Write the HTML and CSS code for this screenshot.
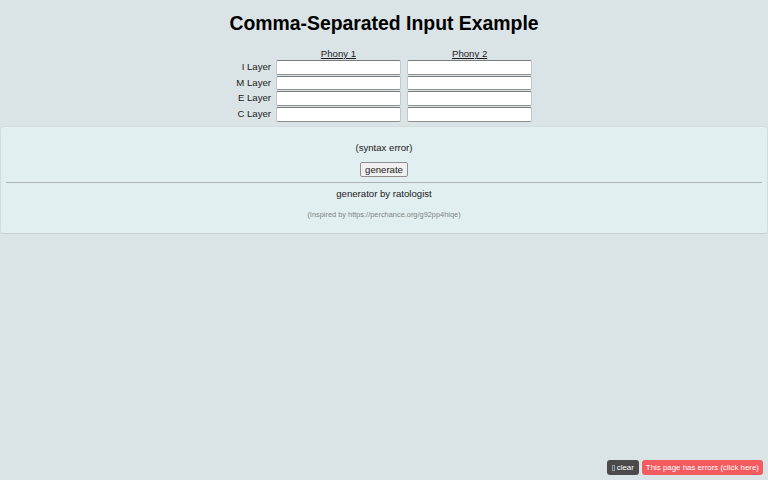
FILE: index.html
```html
<!DOCTYPE html>
<html lang="en">
<head>
    <meta charset="UTF-8">
    <title>Comma-Separated Input Example</title>
    <link rel="stylesheet" href="styles.css">
</head>
<body>
    <h1 class="title">Comma-Separated Input Example</h1>
    <div class="inputs">
        <span></span>
        <span class="phony">Phony 1</span>
        <span class="phony">Phony 2</span>
        <span class="layer">I Layer</span>
        <input class="field" type="text">
        <input class="field" type="text">
        <span class="layer">M Layer</span>
        <input class="field" type="text">
        <input class="field" type="text">
        <span class="layer">E Layer</span>
        <input class="field" type="text">
        <input class="field" type="text">
        <span class="layer">C Layer</span>
        <input class="field" type="text">
        <input class="field" type="text">
    </div>
    <div class="panel">
        <p class="output">(syntax error)</p>
        <button class="generate">generate</button>
        <hr class="rule">
        <p class="credit">generator by ratologist</p>
        <p class="inspired">(Inspired by https://perchance.org/g92pp4hiqe)</p>
    </div>
    <div class="notices">
        <button class="clear"><span class="tofu"></span>clear</button>
        <button class="errors">This page has errors (click here)</button>
    </div>
</body>
</html>
```

FILE: styles.css
```css
html, body {
    height: 100%;
}
body {
    margin: 0;
    background: #dae4e6;
    color: #1a1a1a;
    font-family: "Liberation Sans", Arial, sans-serif;
    font-size: 9.6px;
    text-align: center;
    overflow: hidden;
}
.title {
    margin: 0;
    padding-top: 11px;
    height: 36px;
    color: #000;
    font-size: 19.4px;
    line-height: 24px;
    font-weight: bold;
}
.inputs {
    display: grid;
    grid-template-columns: 270px 125.5px 125.5px;
    column-gap: 5.7px;
    height: 80px;
    grid-template-rows: 13px repeat(4, 15.67px);
    justify-content: start;
    align-items: start;
}
.phony {
    text-decoration: underline;
    line-height: 13px;
}
.layer {
    margin-right: -1px;
    line-height: 14px;
    text-align: right;
}
.field {
    box-sizing: border-box;
    width: 100%;
    height: 14.7px;
    margin: 0;
    padding: 0;
    background: #fff;
    border: 1px solid #8b8f91;
    border-top-color: #77797a;
    border-left-color: #c4c8c9;
    border-right-color: #c4c8c9;
    border-radius: 2px;
}
.panel {
    box-sizing: border-box;
    height: 108px;
    margin-top: -1px;
    padding-top: 15px;
    background: #e2eff0;
    border: 1px solid #d3dcdd;
    border-bottom-color: #c6cfd1;
    border-radius: 4px;
}
.output {
    margin: 0;
    height: 15px;
    line-height: 12px;
}
.generate {
    display: block;
    box-sizing: border-box;
    width: 48px;
    height: 15px;
    margin: 5px auto 0;
    padding: 0;
    background: #f0f0f0;
    border: 1px solid #8f8f8f;
    border-radius: 2px;
    color: #1a1a1a;
    font: 9.6px "Liberation Sans", Arial, sans-serif;
}
.rule {
    height: 0;
    margin: 5px 5px 0;
    border: 0;
    border-top: 1px solid #a9b1b3;
}
.credit {
    margin: 5px 0 0;
    line-height: 12px;
}
.inspired {
    margin: 10px 0 0;
    font-size: 7.4px;
    line-height: 10px;
    color: #7c8486;
}
.notices {
    position: fixed;
    right: 5px;
    bottom: 5px;
    display: flex;
    gap: 3px;
}
.notices button {
    height: 15px;
    padding: 0 4px;
    border: 0;
    border-radius: 3px;
    color: #fff;
    font: 7.9px "Liberation Sans", Arial, sans-serif;
}
.clear {
    display: flex;
    align-items: center;
    background: #4a4a4a;
}
.notices .clear {
    padding: 0 5px;
}
.tofu {
    width: 1px;
    height: 4px;
    margin-right: 2px;
    border: 1px solid #9a9a9a;
}
.errors {
    background: #f45b5f;
}
```
